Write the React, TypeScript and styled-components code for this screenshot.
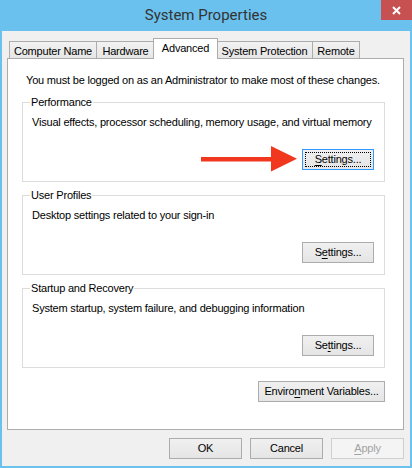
import React from "react";
import styled, { createGlobalStyle, css } from "styled-components";

const Global = createGlobalStyle`
  html, body { margin: 0; padding: 0; background: #6ac1ee; }
  body { font-family: "Liberation Sans", Arial, sans-serif; }
  *, *::before, *::after { box-sizing: border-box; }
`;

const Window = styled.div`
  width: 412px;
  height: 468px;
  display: flex;
  flex-direction: column;
  background: #6ac1ee;
  overflow: hidden;
`;

const TitleBar = styled.div`
  height: 31px;
  flex-shrink: 0;
  display: grid;
  grid-template-columns: 1fr auto 1fr;
`;

const Title = styled.div`
  grid-column: 2;
  font-family: Roboto, "Segoe UI", sans-serif;
  font-size: 15px;
  color: #333;
  line-height: 31px;
`;

const CloseButton = styled.div`
  grid-column: 3;
  justify-self: end;
  width: 31px;
  height: 20px;
  background: #c75050;
  display: flex;
  align-items: center;
  justify-content: center;
`;

const Frame = styled.div`
  flex: 1;
  margin: 0 2px 2px 2px;
  background: #f0f0f0;
  padding: 7px 6px 0 5px;
  display: flex;
  flex-direction: column;
  font-size: 11px;
  letter-spacing: -0.2px;
  color: #000;
`;

const TabStrip = styled.div`
  display: flex;
  align-items: flex-end;
  height: 20px;
  padding-left: 2px;
`;

const Tab = styled.div<{ $active?: boolean; $w: number; $ml: number }>`
  width: ${(p) => p.$w}px;
  margin-left: ${(p) => p.$ml}px;
  border: 1px solid #acacac;
  border-bottom: none;
  display: flex;
  justify-content: center;
  white-space: nowrap;
  line-height: 13px;
  ${(p) =>
    p.$active
      ? css`
          height: 21px;
          margin-right: -1px;
          margin-bottom: -1px;
          background: #fff;
          position: relative;
          z-index: 1;
          align-items: flex-start;
          padding-top: 3px;
        `
      : css`
          height: 17px;
          background: linear-gradient(#f2f2f2, #e6e6e6);
          align-items: center;
          padding-top: 2px;
        `}
`;

const Panel = styled.div`
  height: 372px;
  background: #fff;
  border: 1px solid #acacac;
  padding: 15px 18px 0 14px;
  display: flex;
  flex-direction: column;
`;

const Intro = styled.div`
  line-height: 13px;
  padding-left: 4px;
  white-space: nowrap;
`;

const GroupBox = styled.fieldset<{ $mt: number }>`
  margin: ${(p) => p.$mt}px 0 0 0;
  min-width: 0;
  border: 1px solid #dcdcdc;
  padding: 0 10px 11px 9px;
`;

const Legend = styled.legend`
  line-height: 13px;
  padding: 0 1px;
  margin-left: -2px;
`;

const Description = styled.div`
  line-height: 13px;
  margin-top: 7px;
  white-space: nowrap;
`;

const ButtonRow = styled.div<{ $mt: number }>`
  display: flex;
  justify-content: flex-end;
  align-items: center;
  margin-top: ${(p) => p.$mt}px;
`;

const Button = styled.div<{ $w: number; $focused?: boolean; $disabled?: boolean }>`
  position: relative;
  width: ${(p) => p.$w}px;
  height: 21px;
  border: 1px solid #acacac;
  background: linear-gradient(#f0f0f0, #e5e5e5);
  display: flex;
  align-items: center;
  justify-content: center;
  line-height: 13px;
  white-space: nowrap;
  color: #000;
  ${(p) =>
    p.$focused &&
    css`
      border-color: #3399ff;
      &::after {
        content: "";
        position: absolute;
        inset: 2px;
        border: 1px dotted #000;
      }
    `}
  ${(p) =>
    p.$disabled &&
    css`
      border-color: #d0d0d0;
      background: #f4f4f4;
      color: #a3a3a3;
    `}
`;

const Mn = styled.span`
  text-decoration: underline;
  text-underline-offset: 1.5px;
`;

const Arrow = styled.svg`
  flex-shrink: 0;
  margin: -3px 5px -2px 0;
`;

const BottomRow = styled.div`
  display: flex;
  justify-content: flex-end;
  gap: 8px;
  margin-top: 8px;
`;

const tabs = [
  { label: "Computer Name", w: 88, ml: 0 },
  { label: "Hardware", w: 59, ml: -1 },
  { label: "Advanced", w: 65, ml: -2, active: true },
  { label: "System Protection", w: 97, ml: -1 },
  { label: "Remote", w: 48, ml: -1 },
];

export default function App() {
  return (
    <>
      <Global />
      <Window>
        <TitleBar>
          <Title>System Properties</Title>
          <CloseButton>
            <svg width="9" height="9" viewBox="0 0 9 9">
              <path d="M1 1 L8 8 M8 1 L1 8" stroke="#fff" strokeWidth="2" />
            </svg>
          </CloseButton>
        </TitleBar>
        <Frame>
          <TabStrip>
            {tabs.map((t) => (
              <Tab key={t.label} $w={t.w} $ml={t.ml} $active={t.active}>
                {t.label}
              </Tab>
            ))}
          </TabStrip>
          <Panel>
            <Intro>You must be logged on as an Administrator to make most of these changes.</Intro>

            <GroupBox $mt={9}>
              <Legend>Performance</Legend>
              <Description>
                Visual effects, processor scheduling, memory usage, and virtual memory
              </Description>
              <ButtonRow $mt={20}>
                <Arrow width="96" height="26" viewBox="0 0 96 26">
                  <rect x="0" y="11" width="71" height="4.5" fill="#f2371f" />
                  <polygon points="70,0 96,12.8 70,25.5" fill="#f2371f" />
                </Arrow>
                <Button $w={72} $focused>
                  <span>
                    <Mn>S</Mn>ettings...
                  </span>
                </Button>
              </ButtonRow>
            </GroupBox>

            <GroupBox $mt={7}>
              <Legend>User Profiles</Legend>
              <Description>Desktop settings related to your sign-in</Description>
              <ButtonRow $mt={20}>
                <Button $w={72}>
                  <span>
                    S<Mn>e</Mn>ttings...
                  </span>
                </Button>
              </ButtonRow>
            </GroupBox>

            <GroupBox $mt={7}>
              <Legend>Startup and Recovery</Legend>
              <Description>System startup, system failure, and debugging information</Description>
              <ButtonRow $mt={20}>
                <Button $w={72}>
                  <span>
                    Se<Mn>t</Mn>tings...
                  </span>
                </Button>
              </ButtonRow>
            </GroupBox>

            <ButtonRow $mt={13}>
              <Button $w={127}>
                <span>
                  Enviro<Mn>n</Mn>ment Variables...
                </span>
              </Button>
            </ButtonRow>
          </Panel>
          <BottomRow>
            <Button $w={73}>OK</Button>
            <Button $w={73}>Cancel</Button>
            <Button $w={73} $disabled>
              <span>
                <Mn>A</Mn>pply
              </span>
            </Button>
          </BottomRow>
        </Frame>
      </Window>
    </>
  );
}
